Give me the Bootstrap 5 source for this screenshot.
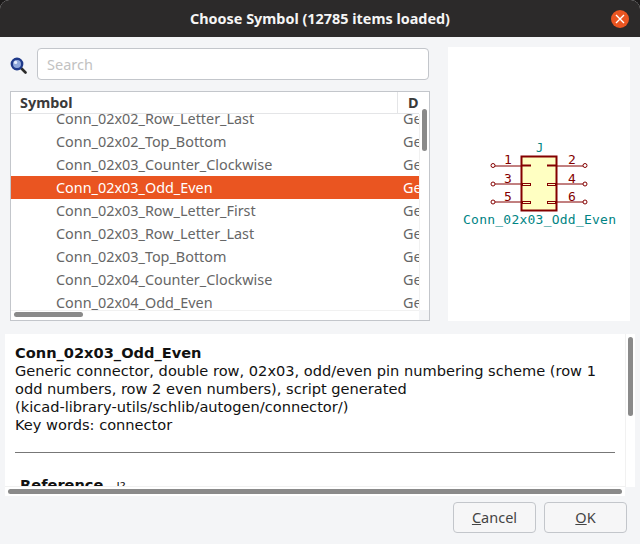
<!DOCTYPE html>
<html lang="en">
<head>
    <meta charset="UTF-8">
    <meta name="viewport" content="width=device-width, initial-scale=1.0">
    <title>Choose Symbol</title>
    <link href="https://cdn.jsdelivr.net/npm/bootstrap@5.3.0/dist/css/bootstrap.min.css" rel="stylesheet">
    <style>
        html, body {
            width: 640px;
            height: 544px;
            overflow: hidden;
            background-color: #1c1a1a;
        }
        .dialog-box {
            width: 640px;
            height: 544px;
            background-color: #f4f5f7;
            border-radius: 9px 9px 0 0;
            overflow: hidden;
            font-family: "Noto Sans", "Open Sans", sans-serif;
        }
        .title-bar {
            height: 37px;
            flex: none;
            background-color: #2c2a2a;
            color: #f5f5f5;
            font-weight: 700;
            font-size: 14.4px;
        }
        .close-dot {
            position: absolute;
            right: 11px;
            top: 10px;
            width: 18px;
            height: 18px;
            border-radius: 50%;
            background-color: #ea5521;
        }
        .top-area {
            height: 297px;
            flex: none;
            padding: 10px 10px 0 10px;
            gap: 18px;
        }
        .left-side {
            width: 420px;
            flex: none;
            padding-top: 1px;
            gap: 11px;
        }
        .search-row {
            height: 32px;
            flex: none;
        }
        .search-icon {
            width: 27px;
            flex: none;
        }
        .search-input {
            height: 32px;
            flex: 1;
            margin-right: 1px;
            border-color: #c3c6cb;
            border-radius: 4px;
            padding: 0 9px;
            font-size: 14.5px;
            color: #555;
        }
        .search-input::placeholder {
            color: #c2c2c2;
        }
        .tree-box {
            height: 230px;
            flex: none;
            background-color: #fff;
            border: 1px solid #c3c6cb;
            position: relative;
            overflow: hidden;
            font-size: 14.4px;
        }
        .tree-head {
            width: 408px;
            height: 22px;
            flex: none;
            border-bottom: 1px solid #e4e5e7;
            color: #3a3a3a;
            font-weight: 700;
        }
        .head-symbol {
            width: 387px;
            padding-left: 9px;
            border-right: 1px solid #e4e5e7;
        }
        .head-desc {
            padding-left: 10px;
            width: 21px;
            overflow: hidden;
        }
        .tree-rows {
            width: 408px;
            height: 196px;
            overflow: hidden;
        }
        .tree-row {
            height: 23px;
            flex: none;
            color: #666;
            border: 0;
            border-radius: 0;
            padding: 0;
            background: transparent;
        }
        .tree-row:first-child {
            margin-top: -7px;
        }
        .tree-row.sel-row {
            background-color: #ea5521;
            color: #fff;
        }
        .row-name {
            width: 392px;
            padding-left: 45px;
            flex: none;
        }
        .row-desc {
            width: 16px;
            overflow: hidden;
            flex: none;
        }
        .scroll-thumb {
            position: absolute;
            background-color: #8a8a8a;
            border-radius: 3px;
        }
        .tree-vthumb {
            left: 411px;
            top: 17px;
            width: 5px;
            height: 42px;
        }
        .tree-hthumb {
            left: 3px;
            top: 220px;
            width: 69px;
            height: 5px;
        }
        .tree-vtrack {
            position: absolute;
            left: 408px;
            top: 22px;
            width: 11px;
            bottom: 0;
            border-left: 1px solid #f1f1f1;
        }
        .tree-htrack {
            position: absolute;
            left: 0;
            top: 218px;
            width: 408px;
            border-top: 1px solid #f1f1f1;
        }
        .tree-corner {
            position: absolute;
            left: 408px;
            top: 218px;
            width: 11px;
            height: 11px;
            background-color: #f4f5f7;
        }
        .preview-box {
            width: 182px;
            height: 274px;
            flex: none;
            background-color: #fff;
        }
        .info-box {
            position: relative;
            height: 162px;
            flex: none;
            margin: 0 5px;
            background-color: #fff;
            overflow: hidden;
            font-family: "DejaVu Sans", sans-serif;
            font-size: 14.6px;
            line-height: 18px;
            color: #111;
        }
        .info-text {
            height: 152px;
            overflow: hidden;
            padding: 10px 0 0 10px;
            width: 620px;
        }
        .info-title {
            font-weight: 700;
        }
        .info-rule {
            width: 600px;
            margin: 18px 0 0 0;
            border-top: 1px solid #777;
            opacity: 1;
        }
        .info-ref {
            padding: 23px 0 0 5px;
            font-weight: 700;
        }
        .info-ref span {
            font-weight: 400;
            font-size: 11px;
            margin-left: 8px;
        }
        .info-vthumb {
            left: 623px;
            top: 3px;
            width: 5px;
            height: 79px;
        }
        .info-hthumb {
            left: 3px;
            top: 155px;
            width: 614px;
            height: 5px;
        }
        .info-vtrack {
            position: absolute;
            left: 620px;
            top: 0;
            height: 153px;
            border-left: 1px solid #f1f1f1;
        }
        .info-htrack {
            position: absolute;
            left: 0;
            top: 152px;
            width: 620px;
            border-top: 1px solid #f1f1f1;
        }
        .info-corner {
            position: absolute;
            left: 620px;
            top: 153px;
            width: 10px;
            height: 9px;
            background-color: #f4f5f7;
        }
        .button-row {
            padding: 6px 13px 0 0;
            gap: 8px;
        }
        .gtk-btn {
            width: 83px;
            height: 31px;
            padding: 0;
            background-color: #f6f6f7;
            border: 1px solid #c3c6cb;
            border-radius: 4px;
            color: #444;
            font-size: 14.5px;
        }
        .sym-text {
            font-family: "DejaVu Sans Mono", monospace;
        }
    </style>
</head>
<body>
    <div class="dialog-box d-flex flex-column">
        <div class="title-bar position-relative d-flex align-items-center justify-content-center">
            <span>Choose Symbol (12785 items loaded)</span>
            <div class="close-dot d-flex align-items-center justify-content-center">
                <svg width="10" height="10" viewBox="0 0 10 10"><path d="M1 1L9 9M9 1L1 9" stroke="#fff" stroke-width="1.4" fill="none"/></svg>
            </div>
        </div>

        <div class="top-area d-flex">
            <div class="left-side d-flex flex-column">
                <div class="search-row d-flex align-items-center">
                    <div class="search-icon">
                        <svg width="17" height="17" viewBox="0 0 17 17">
                            <path d="M10.5 10.5L15.5 15.5" stroke="#2b2b2b" stroke-width="2.6" stroke-linecap="round"/>
                            <circle cx="7" cy="7" r="5.2" fill="#8fa8dc" stroke="#1f3a8a" stroke-width="2.4"/>
                            <circle cx="5.6" cy="5.4" r="1.6" fill="#e4ecfa"/>
                        </svg>
                    </div>
                    <input type="text" class="form-control search-input" placeholder="Search">
                </div>
                <div class="tree-box d-flex flex-column">
                    <div class="tree-head d-flex align-items-center">
                        <div class="head-symbol">Symbol</div>
                        <div class="head-desc">D</div>
                    </div>
                    <div class="tree-rows list-group" id="treeRows"></div>
                    <div class="tree-vtrack"></div>
                    <div class="tree-htrack"></div>
                    <div class="tree-corner"></div>
                    <div class="scroll-thumb tree-vthumb"></div>
                    <div class="scroll-thumb tree-hthumb"></div>
                </div>
            </div>
            <div class="preview-box d-flex align-items-center justify-content-center">
                <svg width="182" height="274" viewBox="448 47 182 274">
                    <rect x="521.5" y="156.5" width="35" height="54" fill="#ffffc2" stroke="#840000" stroke-width="2"/>
                    <g stroke="#840000" fill="none">
                        <path d="M495 166H521M495 184H521M495 202H521M557 166H583M557 184H583M557 202H583"/>
                        <circle cx="493" cy="165.500" r="2"/>
                        <circle cx="493" cy="184" r="2"/>
                        <circle cx="493" cy="202" r="2"/>
                        <circle cx="585" cy="165.500" r="2"/>
                        <circle cx="585" cy="184" r="2"/>
                        <circle cx="585" cy="202" r="2"/>
                        <path d="M522 165.500H531M547 165.500H556" stroke-width="2"/>
                        <rect x="522.500" y="183.500" width="8" height="2"/>
                        <rect x="522.500" y="201.500" width="8" height="2"/>
                        <rect x="547.500" y="183.500" width="8" height="2"/>
                        <rect x="547.500" y="201.500" width="8" height="2"/>
                    </g>
                    <g class="sym-text" fill="#840000" font-size="13">
                        <text x="504" y="164">1</text>
                        <text x="504" y="183">3</text>
                        <text x="504" y="201">5</text>
                        <text x="568" y="164">2</text>
                        <text x="568" y="183">4</text>
                        <text x="568" y="201">6</text>
                    </g>
                    <g class="sym-text" fill="#008484">
                        <text x="536" y="152" font-size="12">J</text>
                        <text x="463" y="224" font-size="13" textLength="153" lengthAdjust="spacing">Conn_02x03_Odd_Even</text>
                    </g>
                </svg>
            </div>
        </div>

        <div class="info-box">
            <div class="info-text">
                <div class="info-title">Conn_02x03_Odd_Even</div>
                <div>Generic connector, double row, 02x03, odd/even pin numbering scheme (row 1<br>odd numbers, row 2 even numbers), script generated<br>(kicad-library-utils/schlib/autogen/connector/)</div>
                <div>Key words: connector</div>
                <hr class="info-rule">
                <div class="info-ref">Reference <span>J?</span></div>
            </div>
            <div class="info-vtrack"></div>
            <div class="info-htrack"></div>
            <div class="info-corner"></div>
            <div class="scroll-thumb info-vthumb"></div>
            <div class="scroll-thumb info-hthumb"></div>
        </div>

        <div class="button-row d-flex justify-content-end">
            <button type="button" class="btn gtk-btn"><u>C</u>ancel</button>
            <button type="button" class="btn gtk-btn"><u>O</u>K</button>
        </div>
    </div>

    <script src="https://cdn.jsdelivr.net/npm/bootstrap@5.3.0/dist/js/bootstrap.bundle.min.js"></script>
    <script>
        const symbols = [
            'Conn_02x02_Row_Letter_Last',
            'Conn_02x02_Top_Bottom',
            'Conn_02x03_Counter_Clockwise',
            'Conn_02x03_Odd_Even',
            'Conn_02x03_Row_Letter_First',
            'Conn_02x03_Row_Letter_Last',
            'Conn_02x03_Top_Bottom',
            'Conn_02x04_Counter_Clockwise',
            'Conn_02x04_Odd_Even'
        ];
        const list = document.getElementById('treeRows');
        symbols.forEach(function (name) {
            const row = document.createElement('div');
            row.className = 'list-group-item tree-row d-flex align-items-center';
            if (name === 'Conn_02x03_Odd_Even') row.classList.add('sel-row');
            row.innerHTML = '<div class="row-name">' + name + '</div><div class="row-desc">Ge</div>';
            list.appendChild(row);
        });
    </script>
</body>
</html>
